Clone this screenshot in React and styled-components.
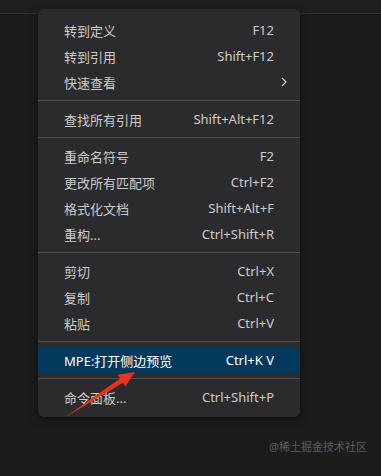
import React from 'react';
import styled, { createGlobalStyle } from 'styled-components';

const GlobalStyle = createGlobalStyle`
  html, body {
    margin: 0;
    padding: 0;
    background: #1c1c1c;
  }
  body {
    width: 381px;
    height: 476px;
    overflow: hidden;
    font-family: "Noto Sans", "Noto Sans CJK SC", sans-serif;
  }
`;

const Page = styled.div`
  position: relative;
  width: 381px;
  height: 476px;
  background: #1c1c1c;
`;

const TopBar = styled.div`
  height: 13px;
  background: #1f1f1f;
  border-bottom: 1px solid #2e2e2e;
`;

const Menu = styled.div`
  position: absolute;
  left: 38px;
  top: 9px;
  width: 262px;
  padding: 8px 0 7px;
  box-sizing: border-box;
  background: #2b2b2d;
  border-radius: 6px;
  box-shadow: 0 2px 8px rgba(0, 0, 0, 0.55);
  display: flex;
  flex-direction: column;
`;

const Item = styled.div`
  display: grid;
  grid-template-columns: 1fr auto 14px;
  align-items: center;
  height: 26px;
  padding: 0 12px 0 26px;
  font-size: 13px;
  color: ${({ active }) => (active ? '#ffffff' : '#cccccc')};
  background: ${({ active }) => (active ? '#04395e' : 'transparent')};
  white-space: nowrap;
`;

const Label = styled.span`
  font-family: "Noto Sans", "Noto Sans CJK SC", sans-serif;
`;

const Keys = styled.span`
  text-align: right;
  font-family: "Noto Sans", sans-serif;
`;

const Indicator = styled.span`
  display: flex;
  justify-content: flex-end;
  padding-right: 1px;
`;

const Separator = styled.div`
  height: 1px;
  margin: 5px 0;
  background: #4e4e50;
`;

const Watermark = styled.div`
  position: absolute;
  right: 14px;
  bottom: 22px;
  font-size: 11px;
  color: #5c5c5c;
  font-family: "Noto Sans", "Noto Sans CJK SC", sans-serif;
`;

const ArrowLayer = styled.svg`
  position: absolute;
  left: 0;
  top: 0;
  pointer-events: none;
`;

const groups = [
  [
    { label: '转到定义', keys: 'F12' },
    { label: '转到引用', keys: 'Shift+F12' },
    { label: '快速查看', submenu: true },
  ],
  [{ label: '查找所有引用', keys: 'Shift+Alt+F12' }],
  [
    { label: '重命名符号', keys: 'F2' },
    { label: '更改所有匹配项', keys: 'Ctrl+F2' },
    { label: '格式化文档', keys: 'Shift+Alt+F' },
    { label: '重构...', keys: 'Ctrl+Shift+R' },
  ],
  [
    { label: '剪切', keys: 'Ctrl+X' },
    { label: '复制', keys: 'Ctrl+C' },
    { label: '粘贴', keys: 'Ctrl+V' },
  ],
  [{ label: 'MPE:打开侧边预览', keys: 'Ctrl+K V', active: true }],
  [{ label: '命令面板...', keys: 'Ctrl+Shift+P' }],
];

const Chevron = () => (
  <svg width="6" height="10" viewBox="0 0 6 10">
    <path d="M1 1 L5 5 L1 9" fill="none" stroke="#cccccc" strokeWidth="1.2" />
  </svg>
);

const App = () => {
  const rows = [];
  groups.forEach((group, gi) => {
    if (gi > 0) rows.push(<Separator key={`sep-${gi}`} />);
    group.forEach((item) => {
      rows.push(
        <Item key={item.label} active={item.active}>
          <Label>{item.label}</Label>
          <Keys>{item.keys || ''}</Keys>
          <Indicator>{item.submenu ? <Chevron /> : null}</Indicator>
        </Item>,
      );
    });
  });

  return (
    <Page>
      <GlobalStyle />
      <TopBar />
      <Menu>{rows}</Menu>
      <ArrowLayer width="381" height="476">
        <polygon
          points="64,418 120.1,378.6 117.7,374.8 135,372 125.3,386.6 122.9,382.8"
          fill="#e8321f"
        />
      </ArrowLayer>
      <Watermark>@稀土掘金技术社区</Watermark>
    </Page>
  );
};

export default App;
